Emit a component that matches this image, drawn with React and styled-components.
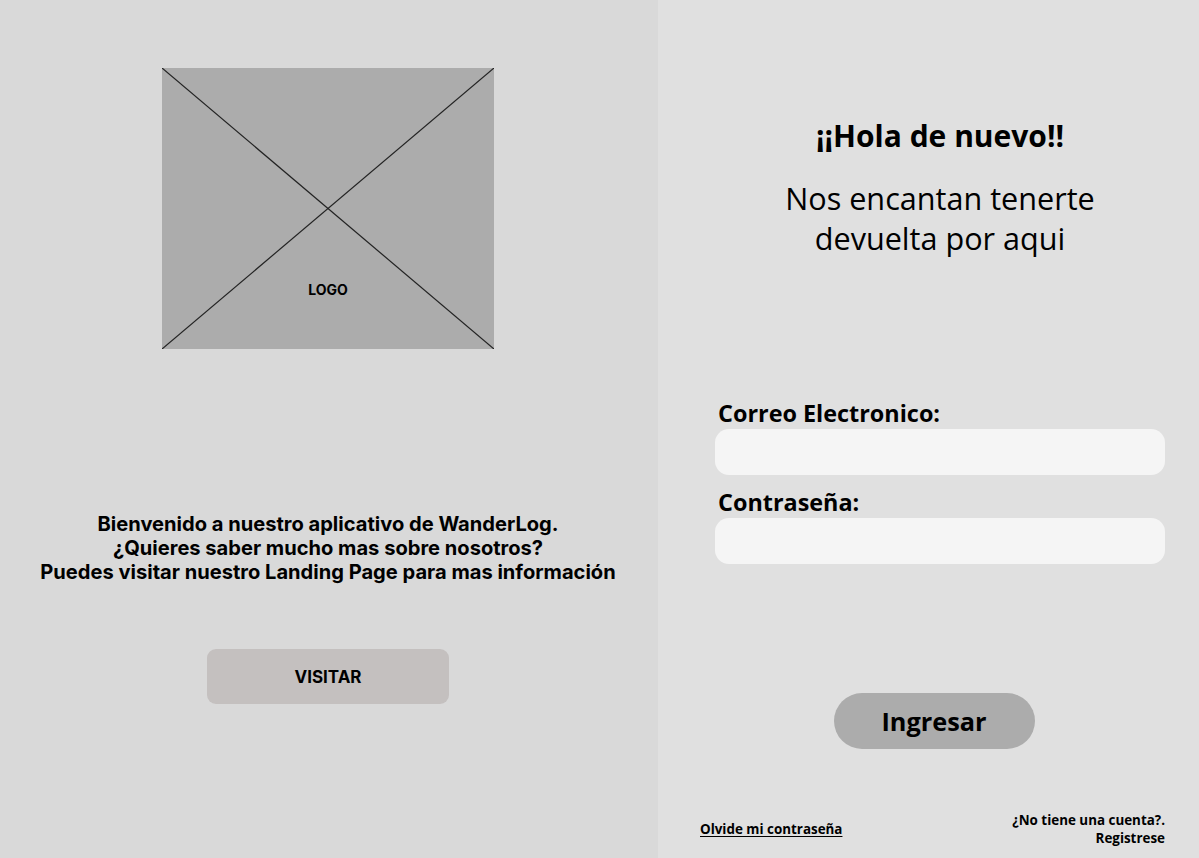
import React from "react";
import styled, { createGlobalStyle } from "styled-components";

const Global = createGlobalStyle`
	html, body {
		margin: 0;
		padding: 0;
	}
	* {
		box-sizing: border-box;
	}
`;

const Page = styled.div`
	display: flex;
	width: 1199px;
	height: 858px;
	overflow: hidden;
`;

const LeftPanel = styled.section`
	width: 658px;
	background: #d9d9d9;
	display: flex;
	flex-direction: column;
	align-items: center;
	font-family: Inter, "Liberation Sans", sans-serif;
	color: #000;
`;

const LogoBox = styled.div`
	position: relative;
	width: 332px;
	height: 281px;
	margin: 68px 2px 0 0;
	background: #acacac;
	svg {
		display: block;
	}
`;

const LogoText = styled.span`
	position: absolute;
	left: 0;
	right: 0;
	top: 213px;
	text-align: center;
	font-size: 14px;
	font-weight: 700;
`;

const Welcome = styled.p`
	margin: 163px 2px 0 0;
	font-size: 20.1px;
	font-weight: 700;
	line-height: 24px;
	text-align: center;
`;

const VisitButton = styled.button`
	margin: 65px 2px 0 0;
	width: 242px;
	height: 55px;
	border: none;
	border-radius: 9px;
	background: #c4c0bf;
	font-family: Inter, "Liberation Sans", sans-serif;
	font-size: 17px;
	font-weight: 700;
	color: #000;
`;

const RightPanel = styled.section`
	flex: 1;
	background: #e0e0e0;
	display: flex;
	flex-direction: column;
	padding: 116px 34px 0 57px;
	font-family: "Open Sans", "Liberation Sans", sans-serif;
	color: #000;
`;

const Title = styled.h1`
	margin: 0;
	font-size: 30px;
	font-weight: 700;
	line-height: 40px;
	text-align: center;
`;

const Subtitle = styled.p`
	margin: 22px 0 0;
	font-size: 30.6px;
	font-weight: 400;
	line-height: 40px;
	text-align: center;
`;

const Label = styled.label`
	display: block;
	margin-top: ${(p) => p.$top}px;
	padding-left: 3px;
	font-size: 23.4px;
	font-weight: 700;
	line-height: 32px;
`;

const Input = styled.input`
	display: block;
	width: 100%;
	height: 46px;
	border: none;
	border-radius: 14px;
	background: #f5f5f5;
	outline: none;
	padding: 0 14px;
	font-family: inherit;
	font-size: 18px;
`;

const SubmitButton = styled.button`
	align-self: center;
	margin: 129px 0 0 -12px;
	width: 201px;
	height: 56px;
	border: none;
	border-radius: 28px;
	background: #acacac;
	font-family: "Open Sans", "Liberation Sans", sans-serif;
	font-size: 25.3px;
	font-weight: 700;
	color: #000;
`;

const Footer = styled.div`
	display: flex;
	justify-content: space-between;
	align-items: center;
	margin: 62px 0 0 -15px;
	font-size: 13.4px;
	font-weight: 700;
	line-height: 18px;
`;

const ForgotLink = styled.a`
	color: #000;
	text-decoration: underline;
	text-underline-offset: 2px;
`;

const RegisterText = styled.div`
	text-align: right;
`;

export default function App() {
	return (
		<>
			<Global />
			<Page>
				<LeftPanel>
					<LogoBox>
						<svg width="332" height="281" viewBox="0 0 332 281">
							<line x1="0" y1="0" x2="332" y2="281" stroke="#222" strokeWidth="1.2" />
							<line x1="332" y1="0" x2="0" y2="281" stroke="#222" strokeWidth="1.2" />
						</svg>
						<LogoText>LOGO</LogoText>
					</LogoBox>
					<Welcome>
						Bienvenido a nuestro aplicativo de WanderLog.
						<br />
						¿Quieres saber mucho mas sobre nosotros?
						<br />
						Puedes visitar nuestro Landing Page para mas información
					</Welcome>
					<VisitButton>VISITAR</VisitButton>
				</LeftPanel>
				<RightPanel>
					<Title>¡¡Hola de nuevo!!</Title>
					<Subtitle>
						Nos encantan tenerte
						<br />
						devuelta por aqui
					</Subtitle>
					<Label $top={139}>Correo Electronico:</Label>
					<Input type="email" />
					<Label $top={11}>Contraseña:</Label>
					<Input type="password" />
					<SubmitButton>Ingresar</SubmitButton>
					<Footer>
						<ForgotLink href="#">Olvide mi contraseña</ForgotLink>
						<RegisterText>
							¿No tiene una cuenta?.
							<br />
							Registrese
						</RegisterText>
					</Footer>
				</RightPanel>
			</Page>
		</>
	);
}
